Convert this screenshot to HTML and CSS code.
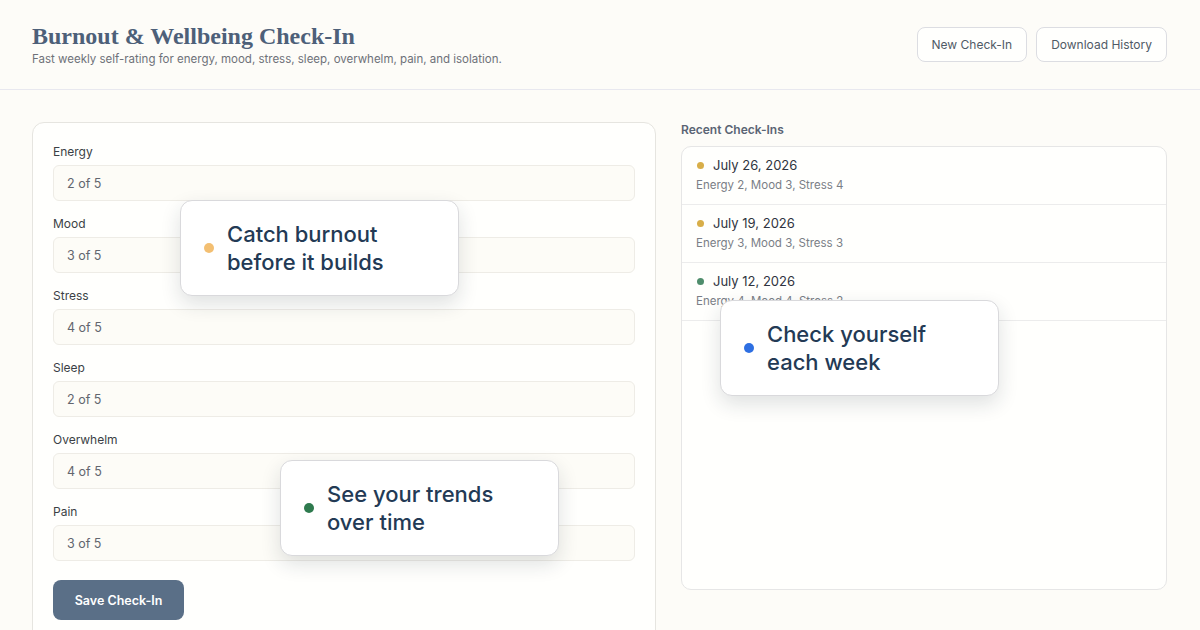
FILE: index.html
```html
<!DOCTYPE html>
<html>
<head>
<meta charset="utf-8">
<link rel="stylesheet" href="styles.css">
</head>
<body>
<header class="header">
  <div class="titles">
    <h1 class="title">Burnout &amp; Wellbeing Check-In</h1>
    <p class="subtitle">Fast weekly self-rating for energy, mood, stress, sleep, overwhelm, pain, and isolation.</p>
  </div>
  <div class="actions">
    <button class="btn">New Check-In</button>
    <button class="btn">Download History</button>
  </div>
</header>
<main class="main">
  <section class="form-card">
    <div class="field"><div class="label">Energy</div><div class="input">2 of 5</div></div>
    <div class="field"><div class="label">Mood</div><div class="input">3 of 5</div></div>
    <div class="field"><div class="label">Stress</div><div class="input">4 of 5</div></div>
    <div class="field"><div class="label">Sleep</div><div class="input">2 of 5</div></div>
    <div class="field"><div class="label">Overwhelm</div><div class="input">4 of 5</div></div>
    <div class="field"><div class="label">Pain</div><div class="input">3 of 5</div></div>
    <button class="save">Save Check-In</button>
  </section>
  <section class="recent">
    <h2 class="recent-title">Recent Check-Ins</h2>
    <div class="list">
      <div class="row">
        <div class="date"><span class="dot gold"></span>July 26, 2026</div>
        <div class="summary">Energy 2, Mood 3, Stress 4</div>
      </div>
      <div class="row">
        <div class="date"><span class="dot gold"></span>July 19, 2026</div>
        <div class="summary">Energy 3, Mood 3, Stress 3</div>
      </div>
      <div class="row">
        <div class="date"><span class="dot green"></span>July 12, 2026</div>
        <div class="summary">Energy 4, Mood 4, Stress 2</div>
      </div>
    </div>
  </section>
</main>
<div class="callout c1"><span class="cdot orange"></span><span class="ctext">Catch burnout<br>before it builds</span></div>
<div class="callout c2"><span class="cdot blue"></span><span class="ctext">Check yourself<br>each week</span></div>
<div class="callout c3"><span class="cdot green2"></span><span class="ctext">See your trends<br>over time</span></div>
</body>
</html>
```
FILE: styles.css
```css
* { box-sizing: border-box; }
html, body { margin: 0; padding: 0; }
body {
  width: 1200px;
  height: 630px;
  overflow: hidden;
  background: #fdfcf8;
  font-family: "Inter", "Noto Sans", sans-serif;
  color: #333;
  position: relative;
}
.header {
  height: 90px;
  border-bottom: 1px solid #e8e8ef;
  display: flex;
  justify-content: space-between;
  align-items: flex-start;
  padding: 0 33px 0 32px;
}
.titles { padding-top: 22px; }
.title {
  margin: 0;
  font-family: "Liberation Serif", serif;
  font-weight: 700;
  font-size: 24px;
  line-height: 28px;
  color: #4d6079;
}
.subtitle {
  margin: 1px 0 0;
  font-size: 11.5px;
  color: #6e7178;
  line-height: 16px;
}
.actions {
  display: flex;
  gap: 9px;
  padding-top: 27px;
}
.btn {
  height: 35px;
  padding: 0 14px;
  border: 1px solid #dcdde2;
  border-radius: 8px;
  background: #fffffd;
  font-family: inherit;
  font-size: 12px;
  color: #505a66;
}
.main {
  display: flex;
  gap: 25px;
  padding: 32px 33px 0 32px;
  height: 540px;
  overflow: hidden;
}
.form-card {
  width: 624px;
  flex: none;
  height: 560px;
  background: #fffffd;
  border: 1px solid #e6e5e0;
  border-radius: 12px;
  padding: 20px 20px 0 20px;
}
.field { margin-bottom: 14px; }
.label {
  font-size: 12px;
  color: #3b3f45;
  line-height: 18px;
  margin-bottom: 4px;
}
.input {
  height: 36px;
  border: 1px solid #eeece6;
  border-radius: 6px;
  background: #fdfcf7;
  padding: 0 13px;
  display: flex;
  align-items: center;
  font-size: 12.5px;
  color: #62666e;
}
.save {
  margin-top: 5px;
  height: 40px;
  width: 131px;
  border: none;
  border-radius: 8px;
  background: #5a6f87;
  color: #ffffff;
  font-family: inherit;
  font-weight: 600;
  font-size: 12.5px;
}
.recent { flex: 1; }
.recent-title {
  margin: 0 0 9px;
  font-size: 12px;
  font-weight: 600;
  color: #5a6474;
  line-height: 15px;
}
.list {
  height: 444px;
  border: 1px solid #e6e6e6;
  border-radius: 10px;
  background: #fffffd;
  overflow: hidden;
}
.row {
  height: 58px;
  border-bottom: 1px solid #ececec;
  padding: 9px 14px 0;
}
.date {
  display: flex;
  align-items: center;
  font-size: 13px;
  font-weight: 400;
  color: #2f3440;
  line-height: 18px;
}
.dot {
  width: 7px;
  height: 7px;
  border-radius: 50%;
  margin-right: 9px;
  margin-left: 1px;
}
.gold { background: #d8ae48; }
.green { background: #4f8d6c; }
.summary {
  margin-top: 3px;
  font-size: 11.5px;
  color: #7a7e86;
  line-height: 16px;
}
.callout {
  position: absolute;
  width: 279px;
  height: 96px;
  background: #ffffff;
  border: 1px solid #d9d9dc;
  border-radius: 12px;
  box-shadow: 0 8px 20px rgba(30, 40, 60, 0.14);
  display: flex;
  align-items: center;
  padding-left: 23px;
}
.c1 { left: 180px; top: 200px; }
.c2 { left: 720px; top: 300px; }
.c3 { left: 280px; top: 460px; }
.cdot {
  width: 10px;
  height: 10px;
  border-radius: 50%;
  margin-right: 13px;
  flex: none;
}
.orange { background: #f3bf72; }
.blue { background: #2e6fe2; }
.green2 { background: #2e7a4e; }
.ctext {
  font-size: 22px;
  line-height: 28px;
  font-weight: 500;
  color: #233a55;
}
```
